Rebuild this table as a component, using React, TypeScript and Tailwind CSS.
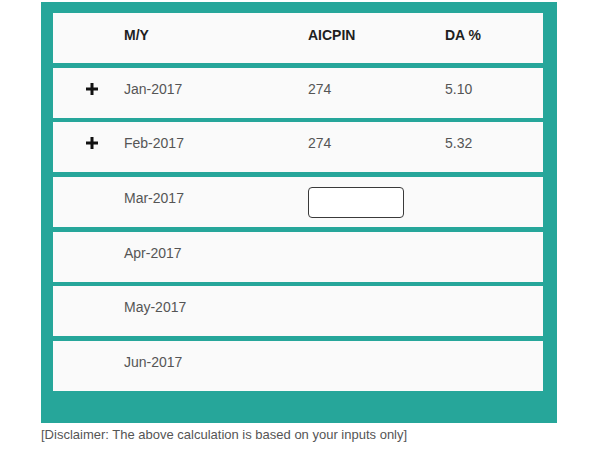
const rows = [
  { month: 'Jan-2017', aicpin: '274', da: '5.10', plus: true },
  { month: 'Feb-2017', aicpin: '274', da: '5.32', plus: true },
  { month: 'Mar-2017', input: true },
  { month: 'Apr-2017' },
  { month: 'May-2017' },
  { month: 'Jun-2017' },
];

function PlusIcon() {
  return (
    <svg width="12" height="12" viewBox="0 0 12 12" className="block">
      <rect x="4.5" y="0" width="3" height="12" fill="#111" />
      <rect x="0" y="4.5" width="12" height="3" fill="#111" />
    </svg>
  );
}

export default function App() {
  return (
    <div className="w-[600px] h-[450px] bg-white font-['Liberation_Sans',Arial,sans-serif]">
      <div className="ml-[41px] mt-[2px] w-[516px] bg-[#26a69a] pl-[12px] pr-[14px] pt-[11px] pb-[32px]">
        <div className="flex flex-col gap-[4.7px]">
          <div className="h-[50px] bg-[#fafafa] grid grid-cols-[71px_184px_137px_1fr] pt-[12px] text-[14px] leading-[20px] font-bold text-[#1f1f1f]">
            <div />
            <div>M/Y</div>
            <div>AICPIN</div>
            <div>DA %</div>
          </div>
          {rows.map((r) => (
            <div
              key={r.month}
              className="h-[50px] bg-[#fafafa] grid grid-cols-[71px_184px_137px_1fr] text-[14px] leading-[20px] text-[#555]"
            >
              <div className="pl-[33px] pt-[15px]">{r.plus && <PlusIcon />}</div>
              <div className="pt-[11px]">{r.month}</div>
              <div className={r.input ? 'flex items-center' : 'pt-[11px]'}>
                {r.input ? (
                  <input className="w-[96px] h-[31px] rounded-[4px] border-[1.5px] border-[#3a3a3a] bg-white outline-none" />
                ) : (
                  r.aicpin
                )}
              </div>
              <div className="pt-[11px]">{r.da}</div>
            </div>
          ))}
        </div>
      </div>
      <p className="ml-[41px] mt-[2px] text-[13px] leading-[20px] text-[#555]">
        [Disclaimer: The above calculation is based on your inputs only]
      </p>
    </div>
  );
}
